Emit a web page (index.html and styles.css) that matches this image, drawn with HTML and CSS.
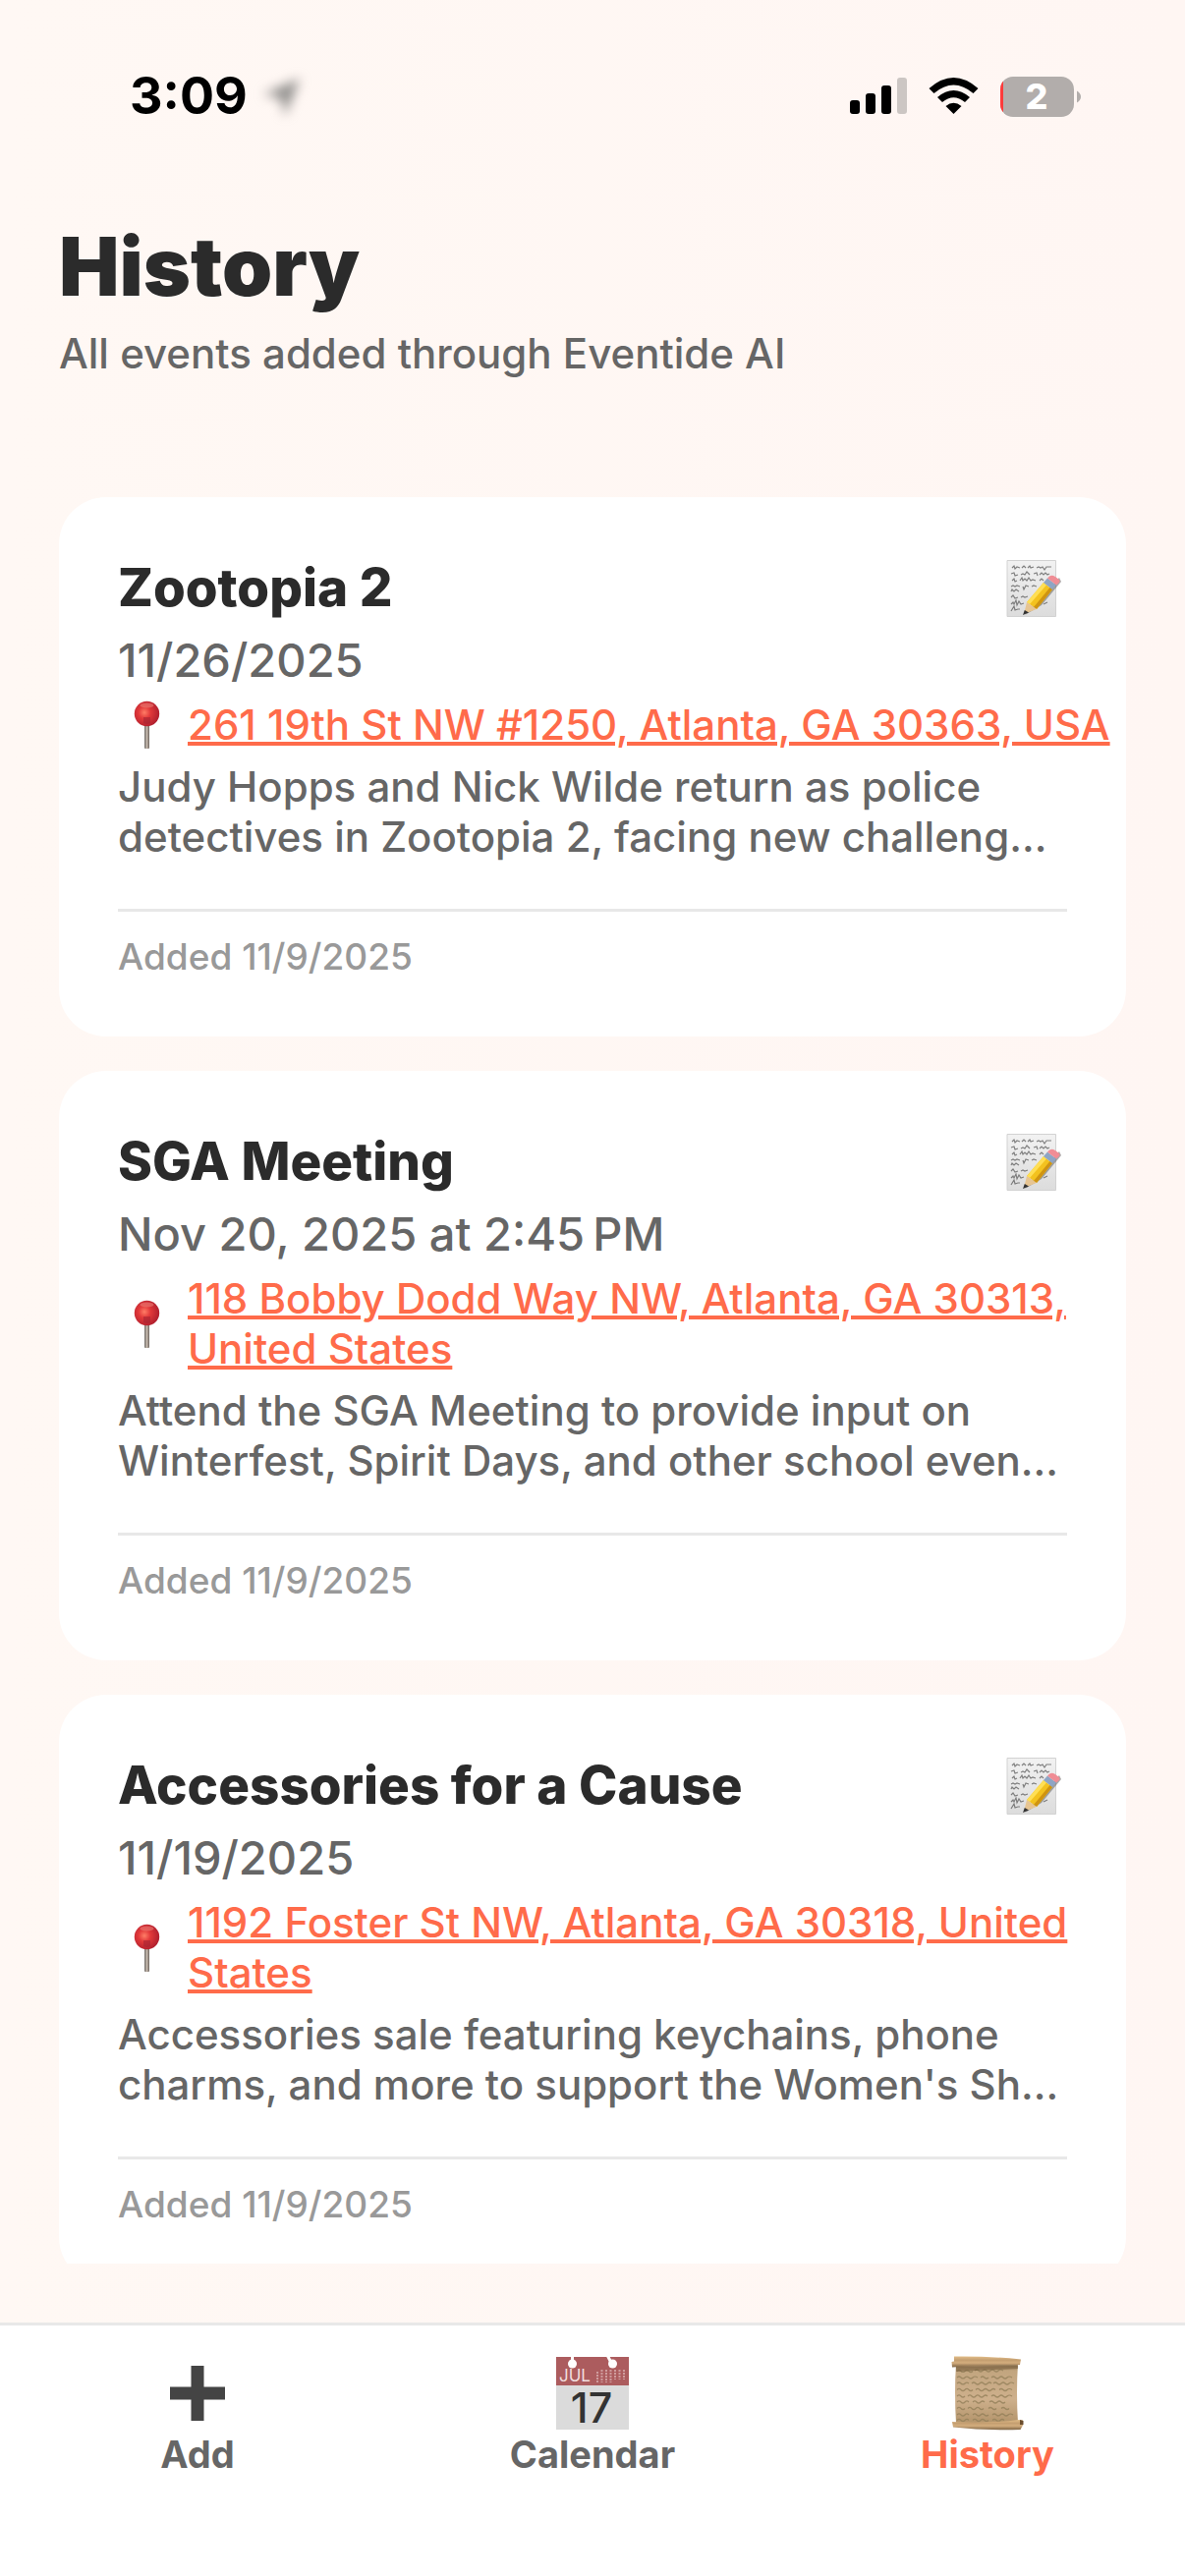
FILE: index.html
```html
<!DOCTYPE html>
<html lang="en">
<head>
<meta charset="utf-8">
<meta name="viewport" content="width=device-width, initial-scale=1">
<title>History</title>
<link rel="stylesheet" href="styles.css">
</head>
<body>
<svg class="defs" aria-hidden="true">
  <defs>
    <linearGradient id="paper" x1="0" y1="0" x2="0" y2="1">
      <stop offset="0" stop-color="#f2f2f2"/><stop offset="1" stop-color="#dcdcdc"/>
    </linearGradient>
    <linearGradient id="steel" x1="0" y1="0" x2="1" y2="0">
      <stop offset="0" stop-color="#6e6a66"/><stop offset="0.5" stop-color="#c4b8ac"/><stop offset="1" stop-color="#6b625c"/>
    </linearGradient>
    <radialGradient id="ball" cx="0.4" cy="0.45" r="0.6">
      <stop offset="0" stop-color="#ff7d66"/><stop offset="0.4" stop-color="#e2393a"/><stop offset="1" stop-color="#b01f2e"/>
    </radialGradient>
    <linearGradient id="sheet" x1="0" y1="0" x2="0" y2="1">
      <stop offset="0" stop-color="#8f7654"/><stop offset="0.12" stop-color="#c2a57f"/><stop offset="0.6" stop-color="#ceb08c"/><stop offset="1" stop-color="#b3946b"/>
    </linearGradient>
    <linearGradient id="roll" x1="0" y1="0" x2="0" y2="1">
      <stop offset="0" stop-color="#e2bd88"/><stop offset="0.35" stop-color="#c49e70"/><stop offset="0.6" stop-color="#d4ae7e"/><stop offset="1" stop-color="#7d6344"/>
    </linearGradient>
    <symbol id="memo" viewBox="0 0 66 65">
      <path fill="url(#paper)" stroke="#d2d2d2" d="M5 4.500H54.500V61.500H5Z"/>
      <g fill="none" stroke="#6d6d6d" stroke-width="1.200" opacity="0.850">
        <path d="M10 12l2-2 1 3 2-2 3 1M20 12l2-2 2 2M26 12l2-2 1 2 3-1M35 12l2-1 2 1 2-1 2 3 2-3 5 0"/>
        <path d="M9 18l3-1 1 3 3-1M19 19l2-1 2 1 2-3 3 3M32 18l3-1 1 3M38 19l2-2 2 2 2-2 2 2 2-1"/>
        <path d="M10 25l2-2 1 3 2-1M18 25l2-3 1 3 2-2 2 2 2-3 2 3 2-1 3 1M38 25l2-2 2 2"/>
        <path d="M9 31l2-1 2 1 2-1 3 1M21 31l1 3 2-4 3 1M30 31l2-1 3 1"/>
        <path d="M9 36l1-2 2 2 2-2 3 2M9 42l2-2 2 3 3-1M19 42l2-1 2 1 3-1"/>
        <path d="M9 49l2-2 1 2 2-4 1 5 2-4 2 3 3-1M9 56l3-5 1 4 3-1 2 0M42 49l4-2"/>
      </g>
      <path fill="#555" opacity="0.500" d="M23 60L40 50 60 26 58 22Z"/>
      <path fill="#f3c21f" d="M25 47L42 27 51 34 35 54Z"/>
      <path fill="#ffdf55" d="M25 47L42 27 45 29.500 28 49Z"/>
      <path fill="#cf9412" d="M32 52L48.500 32 51 34 35 54Z"/>
      <path fill="#e7c592" d="M25 47L35 54 22 59Z"/>
      <path fill="#333" d="M22.800 55L27 57.500 21 60Z"/>
      <path fill="#8ea5c4" d="M42 27L46 22.500 55 29.500 51 34Z"/>
      <path fill="#f08d95" d="M46 22.500Q49 18 54 21L58 24Q60 26 55 29.500Z"/>
    </symbol>
    <symbol id="pin" viewBox="0 0 59 51">
      <rect x="27" y="26" width="5" height="24" rx="1" fill="url(#steel)"/>
      <circle cx="29.500" cy="14.500" r="12.700" fill="url(#ball)"/>
      <ellipse cx="29.500" cy="6" rx="7" ry="2.500" fill="#f08a80" opacity="0.500"/>
      <path fill="#a32433" opacity="0.600" d="M26 18h7v6q-3 2-7 0Z"/>
    </symbol>
  </defs>
</svg>
<div class="app">
  <div class="status">
    <div class="status-left">
      <span class="clock">3:09</span>
      <svg class="location" viewBox="0 0 60 60" aria-hidden="true"><path fill="#8f8d8b" d="M49 12L12 28 30 32 34 50Z"/></svg>
    </div>
    <div class="status-right">
      <svg class="signal" viewBox="0 0 58 38" aria-hidden="true">
        <rect x="0" y="23" width="10" height="14" rx="3"/>
        <rect x="16" y="16" width="10" height="21" rx="3"/>
        <rect x="32" y="8" width="10" height="29" rx="3"/>
        <rect x="48" y="0" width="10" height="37" rx="3" fill="#ccc6c3"/>
      </svg>
      <svg class="wifi" viewBox="0 0 51 38" aria-hidden="true">
        <path d="M0.500 11Q25.500 -11 50.500 11L45.500 16Q25.500 -1 5.500 16Z"/>
        <path d="M9 20Q25.500 6 42 20L37 25Q25.500 15.500 14 25Z"/>
        <path d="M17.500 29Q25.500 22.500 33.500 29L25.500 37Z"/>
      </svg>
      <svg class="battery" viewBox="0 0 82 41" role="img" aria-label="Battery 2 percent">
        <clipPath id="cell"><rect width="75" height="41" rx="13"/></clipPath>
        <g clip-path="url(#cell)"><rect width="75" height="41" fill="#b2adab"/><rect width="3" height="41" fill="#ff3b3b"/></g>
        <path fill="#b2adab" d="M78 14.500Q82 17 82 20.500T78 26.500Z"/>
        <text class="battery-level" x="37" y="33" text-anchor="middle">2</text>
      </svg>
    </div>
  </div>

  <header class="header">
    <h1 class="title">History</h1>
    <p class="subtitle">All events added through Eventide AI</p>
  </header>

  <main class="list">
    <article class="card">
      <div class="card-head">
        <h2 class="card-title">Zootopia 2</h2>
        <svg class="memo" role="img" aria-label="Note"><use href="#memo"/></svg>
      </div>
      <p class="date">11/26/2025</p>
      <div class="place">
        <svg class="pin" aria-hidden="true"><use href="#pin"/></svg>
        <a class="address" href="#map-1">261 19th St NW #1250, Atlanta, GA 30363, USA</a>
      </div>
      <p class="description">Judy Hopps and Nick Wilde return as police detectives in Zootopia 2, facing new challeng…</p>
      <p class="added">Added 11/9/2025</p>
    </article>

    <article class="card">
      <div class="card-head">
        <h2 class="card-title">SGA Meeting</h2>
        <svg class="memo" role="img" aria-label="Note"><use href="#memo"/></svg>
      </div>
      <p class="date">Nov 20, 2025 at 2:45&#8239;PM</p>
      <div class="place">
        <svg class="pin" aria-hidden="true"><use href="#pin"/></svg>
        <a class="address" href="#map-2">118 Bobby Dodd Way NW, Atlanta, GA 30313, United States</a>
      </div>
      <p class="description">Attend the SGA Meeting to provide input on Winterfest, Spirit Days, and other school even…</p>
      <p class="added">Added 11/9/2025</p>
    </article>

    <article class="card">
      <div class="card-head">
        <h2 class="card-title">Accessories for a Cause</h2>
        <svg class="memo" role="img" aria-label="Note"><use href="#memo"/></svg>
      </div>
      <p class="date">11/19/2025</p>
      <div class="place">
        <svg class="pin" aria-hidden="true"><use href="#pin"/></svg>
        <a class="address" href="#map-3">1192 Foster St NW, Atlanta, GA 30318, United States</a>
      </div>
      <p class="description">Accessories sale featuring keychains, phone charms, and more to support the Women's Sh…</p>
      <p class="added">Added 11/9/2025</p>
    </article>
  </main>

  <nav class="tabs">
    <button class="tab" type="button">
      <svg class="tab-icon" viewBox="0 0 78 78" aria-hidden="true"><path fill="#444" d="M32.500 11h13v21.500H67v13H45.500V67h-13V45.500H11v-13h21.500Z"/></svg>
      Add
    </button>
    <button class="tab" type="button">
      <svg class="tab-icon" viewBox="0 0 78 78" aria-hidden="true">
        <path fill="#dbdbdb" d="M2 31H76V76H2Z"/>
        <path fill="#ac5c5e" d="M2 2H76V31H2Z"/>
        <path stroke="#fff" stroke-width="3" d="M18.500 0V8M54 0L58 8"/>
        <circle cx="18.500" cy="9" r="4.500" fill="#fff"/><circle cx="59.500" cy="9" r="4.500" fill="#fff"/>
        <text class="cal-month" x="5" y="27">JUL</text>
        <path stroke="#cf9c9d" stroke-width="2" stroke-dasharray="2 1" d="M44 17V28M48.500 15V28M53 15V28M57.500 15V28M62 15V25M66.500 15V25M71 15V25"/>
        <text class="cal-day" x="38" y="69" text-anchor="middle">17</text>
      </svg>
      Calendar
    </button>
    <button class="tab tab-active" type="button" aria-current="page">
      <svg class="tab-icon" viewBox="0 0 78 78" aria-hidden="true">
        <path fill="url(#sheet)" d="M7 9H70Q68 38 70 69H7Q5 38 7 9Z"/>
        <g fill="none" stroke="#94805a" stroke-width="1.200" opacity="0.800">
          <path d="M8 16.500q2-2 4 0t4 0 4 0 4 0M26 16q2-2 4 0t4 0 4 0 4 0 4 0 4 0 5 0"/>
          <path d="M8 23q2-2 4 0t4 0 4 0 4 0 5 0M32 23q2-2 4 0t4 0M43 23q2-2 4 0t4 0 4 0 4 0 5 0"/>
          <path d="M8 29q2-2 4 0t4 0 4 0M23 29q2-2 4 0t4 0 4 0 4 0 4 0M45 29q2-2 4 0t4 0 4 0 4 0 5 0"/>
          <path d="M8 35.500q2-2 4 0t4 0 4 0 4 0M27 35.500q2-2 4 0t4 0 4 0 4 0 4 0M51 35.500q2-2 4 0t4 0 5 0"/>
          <path d="M8 42q2-2 4 0t4 0M19 42q2-2 4 0t4 0 4 0 4 0 4 0M43 42q2-2 4 0t4 0 4 0 4 0 5 0"/>
          <path d="M8 48q2-2 4 0t4 0 4 0M24 48q2-2 4 0t4 0 4 0M41 48q2-2 4 0t4 0 4 0 4 0"/>
          <path d="M8 54.500q2-2 4 0t4 0M19 54.500q2-2 4 0t4 0 4 0 4 0M40 54.500q2-2 4 0t4 0M53 54.500q2-2 4 0t4 0"/>
          <path d="M8 61q2-2 4 0t4 0 4 0M24 61q2-2 4 0t4 0 4 0 4 0M44 61q2-2 4 0t4 0 4 0 4 0 5 0"/>
          <path d="M8 66.500q2-2 4 0t4 0 4 0M24 66.500q2-2 4 0t4 0 4 0 4 0M44 66.500q2-2 4 0t4 0 4 0"/>
        </g>
        <path fill="#6f5536" opacity="0.500" d="M7 12L70 11V14L7 17Z"/>
        <path fill="url(#roll)" d="M5 1.500Q40 1 73 4.500L72 10Q40 10 3 12.500L2.500 7 5 6.500Z"/>
        <path fill="url(#roll)" d="M3 68Q40 70 71 66L75 66.500V71.500L72.500 76Q36 77 4 73.500Z"/>
        <path fill="#6a4d2d" d="M72 66L75.500 67V71L72 71Z"/>
      </svg>
      History
    </button>
  </nav>
</div>
</body>
</html>
```
FILE: styles.css
```css
* {
  box-sizing: border-box;
}

body {
  margin: 0;
  font-family: Inter, "Liberation Sans", sans-serif;
  font-weight: 500;
  color: #666;
  background: #fff7f4;
}

h1, h2, p {
  margin: 0;
}

.defs {
  position: absolute;
  width: 0;
  height: 0;
}

.app {
  display: flex;
  flex-direction: column;
  height: 100vh;
  background: linear-gradient(90deg, #fff8f4, #fff6f3);
}

/* Status bar */
.status {
  display: flex;
  justify-content: space-between;
  align-items: center;
  padding: 66px 106px 0 132px;
}

.status-left,
.status-right {
  display: flex;
  align-items: center;
}

.status-left {
  gap: 4px;
}

.clock {
  font-size: 52px;
  font-weight: 700;
  line-height: 64px;
  color: #000;
}

.location {
  width: 60px;
  height: 60px;
  filter: blur(6px);
}

.status-right {
  gap: 22px;
}

.signal {
  width: 58px;
  height: 38px;
}

.wifi {
  width: 51px;
  height: 38px;
}

.battery {
  width: 82px;
  height: 41px;
  overflow: visible;
}

.battery-level {
  font-size: 36px;
  font-weight: 800;
  fill: #fff;
}

/* Page heading */
.header {
  display: flex;
  flex-direction: column;
  gap: 12px;
  padding: 92px 60px 61px;
}

.title {
  font-size: 82px;
  font-weight: 900;
  line-height: 100px;
  color: #2b2b2b;
}

.subtitle {
  font-size: 42px;
  line-height: 51px;
}

/* Event list */
.list {
  flex: 1;
  display: flex;
  flex-direction: column;
  gap: 35px;
  min-height: 0;
  margin-bottom: 60px;
  padding: 60px 60px 0;
  overflow-y: auto;
  scrollbar-width: none;
}

.card {
  flex: none;
  display: flex;
  flex-direction: column;
  gap: 12px;
  padding: 60px;
  border-radius: 48px;
  background: #fff;
}

.card-head {
  display: flex;
  justify-content: space-between;
  align-items: center;
}

.card-title {
  font-size: 53px;
  font-weight: 800;
  line-height: 65px;
  color: #2b2b2b;
}

.memo {
  flex: none;
  width: 66px;
  height: 65px;
}

.date {
  font-size: 47px;
  line-height: 57px;
}

.place {
  display: flex;
  align-items: center;
  gap: 12px;
  margin-right: -60px;
}

.pin {
  flex: none;
  width: 59px;
  height: 51px;
}

.address {
  font-size: 42px;
  line-height: 51px;
  color: #ff6b4a;
  text-decoration: underline;
  text-decoration-thickness: 4px;
  text-underline-offset: 2px;
}

.description {
  font-size: 42px;
  line-height: 51px;
}

.added {
  margin-top: 36px;
  padding-top: 24px;
  border-top: 3px solid #e8e8e8;
  font-size: 37px;
  line-height: 43px;
  color: #999;
}

/* Bottom tabs */
.tabs {
  display: flex;
  border-top: 3px solid #e8e8e8;
  background: #fff;
}

.tab {
  flex: 1;
  display: flex;
  flex-direction: column;
  align-items: center;
  padding: 30px 0 101px;
  border: 0;
  background: none;
  font: 700 38px/46px Inter, "Liberation Sans", sans-serif;
  color: #666;
}

.tab-active {
  color: #ff6b4a;
}

.tab-icon {
  width: 78px;
  height: 78px;
  overflow: visible;
}

.cal-month {
  font-size: 17px;
  font-weight: 400;
  fill: #f1dede;
}

.cal-day {
  font-size: 43px;
  font-weight: 500;
  fill: #333;
}
```
